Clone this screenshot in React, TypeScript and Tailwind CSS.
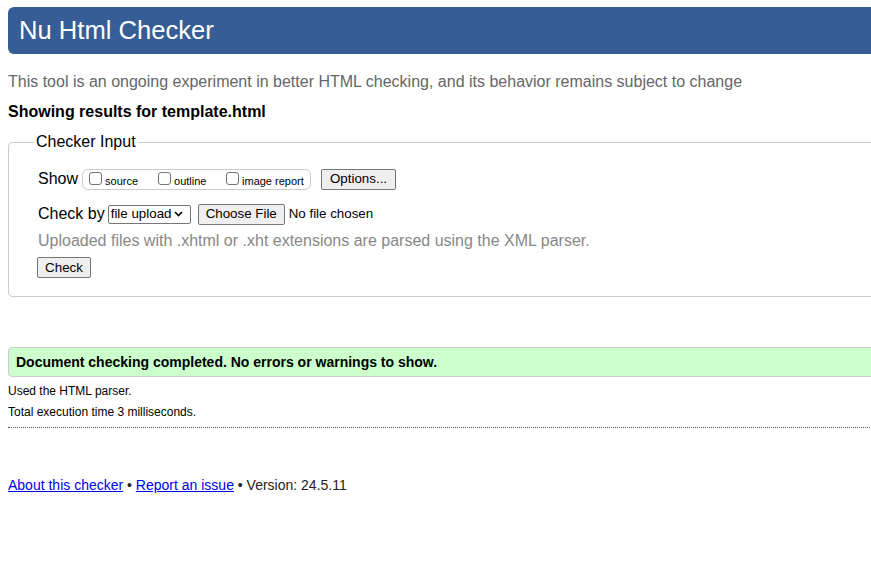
import React from "react"

function Box({ label, w }: { label: string; w?: string }) {
  return (
    <span className={`inline-flex items-start h-[19px] pt-[2px] ${w ?? ""}`}>
      <span className="w-[13px] h-[13px] border border-[#767676] rounded-[3px] bg-white mr-[3px] shrink-0" />
      <span className="text-[11px] leading-[13px] mt-[3px] text-black whitespace-nowrap">{label}</span>
    </span>
  )
}

function Btn({ children, className = "" }: { children: React.ReactNode; className?: string }) {
  return (
    <span className={`inline-flex items-center justify-center whitespace-nowrap h-[21px] bg-[#efefef] border border-[#767676] rounded-[2px] text-[13.33px] text-black ${className}`}>
      {children}
    </span>
  )
}

export default function App() {
  return (
    <div className="w-[871px] h-[563px] overflow-hidden bg-white font-['Liberation_Sans',Arial,sans-serif]">
      <div className="w-[1100px] pl-[8px]">
        {/* header */}
        <div className="mt-[7px] h-[47px] bg-[#365d95] rounded-l-[6px] flex items-center pl-[11px]">
          <h1 className="text-[25.6px] text-white leading-none">Nu Html Checker</h1>
        </div>

        <p className="mt-[19px] text-[16px] leading-[18px] text-[#666]">
          This tool is an ongoing experiment in better HTML checking, and its behavior remains subject to change
        </p>
        <p className="mt-[12px] text-[16px] leading-[18px] font-bold text-black">Showing results for template.html</p>

        {/* checker input */}
        <div className="relative mt-[21px] h-[155px] border border-[#ccc] rounded-[4px] pl-[29px] pt-[25px]">
          <span className="absolute left-[25px] top-[-11px] px-[2px] bg-white text-[16px] leading-[20px] text-black">Checker Input</span>

          <div className="flex items-center h-[22px]">
            <span className="text-[16px] text-black mr-[4px]">Show</span>
            <span className="inline-flex items-center h-[21px] w-[229px] border border-[#ccc] rounded-[6px] pl-[6px]">
              <Box label="source" w="w-[69px]" />
              <Box label="outline" w="w-[68px]" />
              <Box label="image report" />
            </span>
            <Btn className="ml-[10px] w-[75px]">Options...</Btn>
          </div>

          <div className="flex items-center h-[22px] mt-[13px]">
            <span className="text-[16px] text-black mr-[3px]">Check by</span>
            <span className="inline-flex items-center h-[19px] w-[83px] border border-[#767676] rounded-[2px] pl-[2px] text-[13.33px] text-black whitespace-nowrap">
              file upload
              <svg className="ml-[3px]" width="9" height="6" viewBox="0 0 9 6">
                <path d="M1 1l3.5 3.5L8 1" stroke="black" strokeWidth="1.6" fill="none" />
              </svg>
            </span>
            <Btn className="ml-[7px] w-[87px]">Choose File</Btn>
            <span className="ml-[4px] text-[13.33px] text-black">No file chosen</span>
          </div>

          <p className="mt-[7px] text-[16px] leading-[18px] text-[#888]">
            Uploaded files with .xhtml or .xht extensions are parsed using the XML parser.
          </p>

          <Btn className="mt-[7px] -ml-[1px] w-[54px]">Check</Btn>
        </div>

        {/* result */}
        <div className="mt-[50px] h-[30px] bg-[#ccffcc] border border-[#ccc] rounded-l-[4px] flex items-center pl-[7px]">
          <span className="text-[14px] font-bold text-black">Document checking completed. No errors or warnings to show.</span>
        </div>
        <p className="mt-[7px] text-[12px] leading-[14px] text-black">Used the HTML parser.</p>
        <p className="mt-[7px] text-[12px] leading-[14px] text-black">Total execution time 3 milliseconds.</p>
        <div className="mt-[8px] border-t border-dotted border-[#555]" />

        <p className="mt-[49px] text-[14px] leading-[16px] text-[#222]">
          <a className="text-[#0000ee] underline">About this checker</a> •{" "}
          <a className="text-[#0000ee] underline">Report an issue</a> • Version: 24.5.11
        </p>
      </div>
    </div>
  )
}
